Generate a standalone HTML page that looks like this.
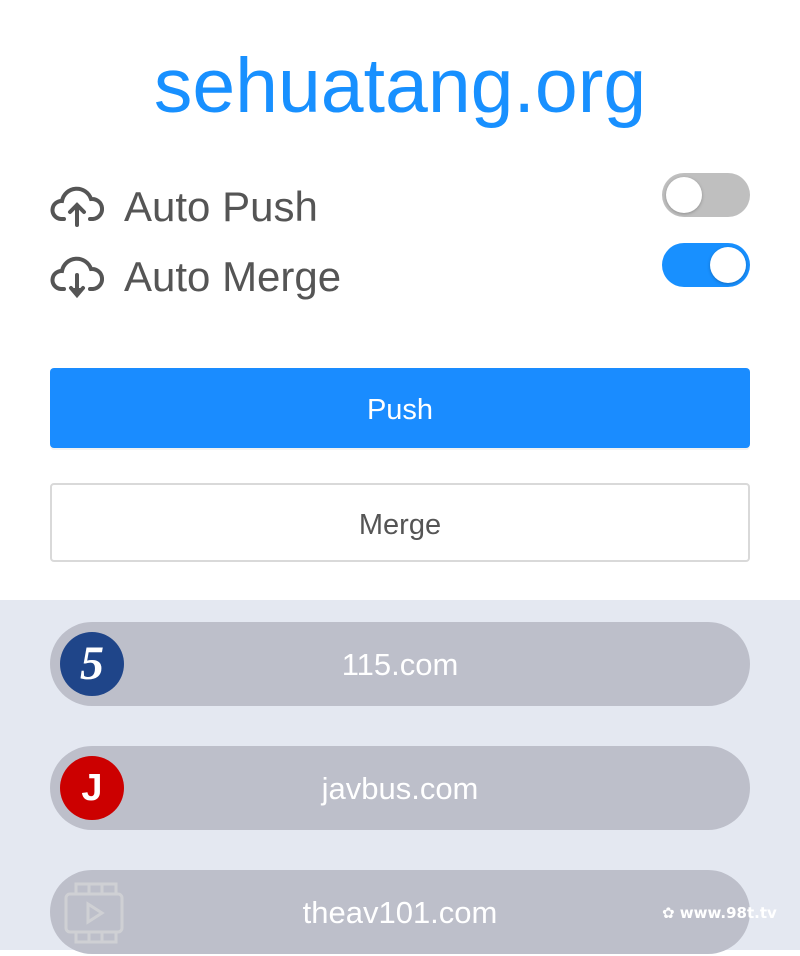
<!DOCTYPE html>
<html><head><meta charset="utf-8"><style>
*{margin:0;padding:0;box-sizing:border-box}
body{width:800px;height:950px;overflow:hidden;background:#fff;font-family:"Liberation Sans","DejaVu Sans",sans-serif;position:relative}
.title{position:absolute;top:38px;left:0;width:800px;text-align:center;font-size:77px;color:#1890ff;line-height:96px}
.row{position:absolute;left:50px;font-size:42px;color:#555;line-height:50px;display:flex;align-items:center}
.row svg{margin-right:20px}
.tog{position:absolute;left:662px;width:88px;height:44px;border-radius:22px}
.tog i{position:absolute;top:4px;width:36px;height:36px;border-radius:50%;background:#fff;box-shadow:0 1px 3px rgba(0,0,0,.25)}
.btn{position:absolute;left:50px;width:700px;border-radius:4px;text-align:center;font-size:29px}
.gray{position:absolute;top:600px;left:0;width:800px;height:350px;background:#e4e8f1}
.pill{position:absolute;left:50px;width:700px;height:84px;border-radius:42px;background:#bdbfca;color:#fff;font-size:31px;text-align:center;line-height:86px}
.logo{position:absolute;left:10px;top:10px;width:64px;height:64px;border-radius:50%;color:#fff;line-height:64px;font-weight:bold}
</style></head><body>
<div class="title">sehuatang.org</div>
<div class="row" style="top:182px"><svg width="54" height="44" viewBox="0 0 54 44" fill="none" stroke="#555" stroke-width="4" stroke-linecap="round"><path d="M14 34H11A9 9 0 0 1 12 16A15 15 0 0 1 41 14A10 10 0 0 1 43 34H40"/><path d="M27 40V20M20 27L27 20L34 27"/></svg>Auto Push</div>
<div class="row" style="top:252px"><svg width="54" height="44" viewBox="0 0 54 44" fill="none" stroke="#555" stroke-width="4" stroke-linecap="round"><path d="M14 34H11A9 9 0 0 1 12 16A15 15 0 0 1 41 14A10 10 0 0 1 43 34H40"/><path d="M27 20V38"/><path d="M21 33L27 40L33 33" fill="#555"/></svg>Auto Merge</div>
<div class="tog" style="top:173px;background:#bfbfbf"><i style="left:4px"></i></div>
<div class="tog" style="top:243px;background:#1890ff"><i style="right:4px"></i></div>
<div class="btn" style="top:368px;height:80px;line-height:84px;background:#1a8cff;color:#fff;box-shadow:0 2px 0 rgba(0,0,0,.05)">Push</div>
<div class="btn" style="top:483px;height:79px;line-height:80px;border:2px solid #d9d9d9;color:#555">Merge</div>
<div class="gray"></div>
<div class="pill" style="top:622px"><div class="logo" style="background:#1f4589;font-family:'Liberation Serif',serif;font-size:48px;font-style:italic">5</div>115.com</div>
<div class="pill" style="top:746px"><div class="logo" style="background:#cc0000;font-size:38px">J</div>javbus.com</div>
<div class="pill" style="top:870px"><svg style="position:absolute;left:12px;top:10px" width="62" height="64" viewBox="0 0 62 64" fill="none" stroke="#cfd0d4" stroke-width="3"><rect x="4" y="14" width="56" height="38" rx="4"/><path d="M14 4h40v10H14zM14 52h40v10H14zM27 4v10M40 4v10M27 52v10M40 52v10"/><path d="M26 24l14 9-14 9z"/></svg>theav101.com</div>
<div style="position:absolute;left:662px;top:904px;color:#fff;font-size:15px;font-weight:bold;font-family:'DejaVu Sans',sans-serif">✿ www.98t.tv</div>
</body></html>
